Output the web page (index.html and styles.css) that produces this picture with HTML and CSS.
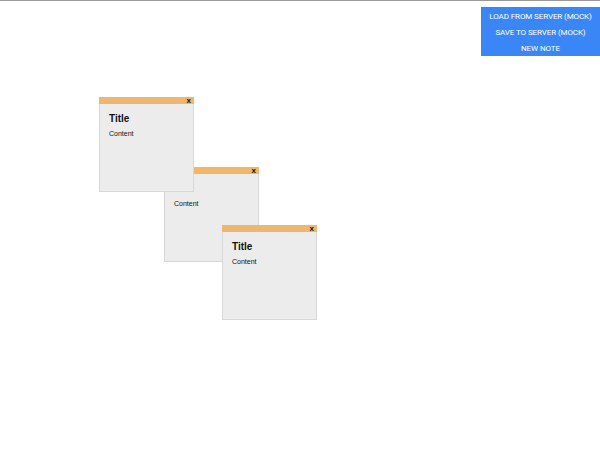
FILE: index.html
```html
<!DOCTYPE html>
<html>
<head>
<meta charset="utf-8">
<link rel="stylesheet" href="styles.css">
</head>
<body>
<div class="topline"></div>
<div class="menu">
  <button class="menu-btn">LOAD FROM SERVER (MOCK)</button>
  <button class="menu-btn">SAVE TO SERVER (MOCK)</button>
  <button class="menu-btn">NEW NOTE</button>
</div>
<div class="board">
  <div class="note n2">
    <div class="note-head"><span class="close">x</span></div>
    <div class="note-body">
      <div class="note-title"></div>
      <div class="note-content">Content</div>
    </div>
  </div>
  <div class="note n1">
    <div class="note-head"><span class="close">x</span></div>
    <div class="note-body">
      <div class="note-title">Title</div>
      <div class="note-content">Content</div>
    </div>
  </div>
  <div class="note n3">
    <div class="note-head"><span class="close">x</span></div>
    <div class="note-body">
      <div class="note-title">Title</div>
      <div class="note-content">Content</div>
    </div>
  </div>
</div>
</body>
</html>
```
FILE: styles.css
```css
html, body {
  margin: 0;
  padding: 0;
  background: #fff;
  font-family: "Liberation Sans", Arial, sans-serif;
}
body {
  width: 600px;
  height: 455px;
  position: relative;
  overflow: hidden;
}
.topline {
  height: 1px;
  background: #999;
}
.menu {
  position: absolute;
  top: 7px;
  right: 0;
  width: 119px;
  height: 49px;
  background: #3b86f7;
  display: flex;
  flex-direction: column;
  align-items: center;
  padding-top: 2px;
  box-sizing: border-box;
}
.menu-btn {
  border: 0;
  background: transparent;
  color: #fff;
  font-family: Roboto, "Liberation Sans", sans-serif;
  font-size: 8px;
  height: 16px;
  line-height: 16px;
  padding: 0;
  letter-spacing: -0.1px;
}
.board {
  position: relative;
}
.note {
  position: absolute;
  width: 95px;
  height: 95px;
  box-sizing: border-box;
  border: 1px solid #d8d8d8;
  background: #ececec;
  display: flex;
  flex-direction: column;
}
.n1 { left: 99px; top: 96px; }
.n2 { left: 164px; top: 166px; }
.n3 { left: 222px; top: 224px; }
.note-head {
  height: 7px;
  background: #eeb76b;
  margin: -1px -1px 0;
  display: flex;
  justify-content: flex-end;
  align-items: center;
  padding-right: 3px;
}
.close {
  font-size: 8px;
  font-weight: bold;
  line-height: 7px;
  color: #111;
}
.note-body {
  padding: 9px 9px;
}
.note-title {
  font-size: 10px;
  font-weight: bold;
  color: #111;
  line-height: 12px;
  min-height: 12px;
}
.note-content {
  font-size: 7px;
  color: #111;
  margin-top: 4px;
  line-height: 10px;
}
```
